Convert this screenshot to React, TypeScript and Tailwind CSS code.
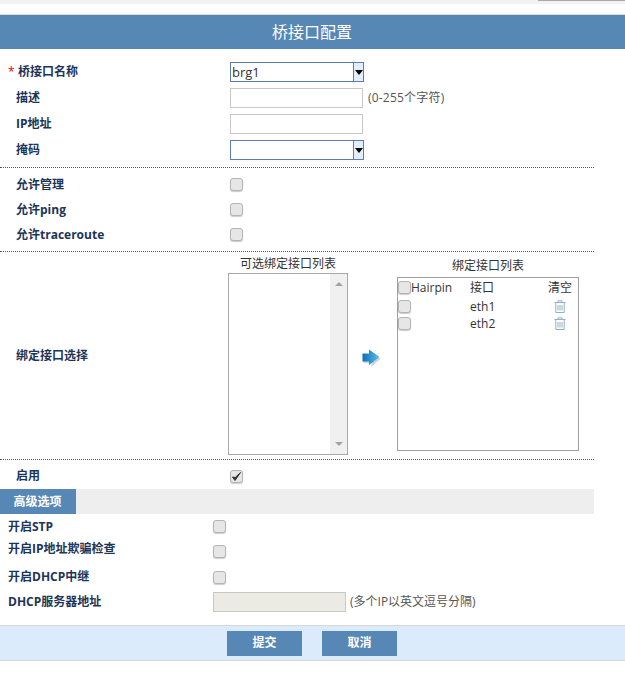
import React from "react";

const labelClass = "font-bold text-[12px] text-[#1d3557]";

function Check({ checked }: { checked?: boolean }) {
  return (
    <span className="w-[13px] h-[13px] shrink-0 rounded-[3px] border border-[#b4b4b4] bg-[#e6e6e6] shadow-[0_1px_1px_rgba(0,0,0,0.2)] flex items-center justify-center">
      {checked && (
        <svg width="11" height="11" viewBox="0 0 11 11">
          <path d="M1.5 6 L4 9.5 L9.5 1.5 L4.2 6.5 Z" fill="#333" stroke="#333" strokeWidth="1" />
        </svg>
      )}
    </span>
  );
}

function Select({ value }: { value?: string }) {
  return (
    <div className="w-[134px] h-[20px] border border-[#5a7db3] flex text-[13px] text-[#333]">
      <div className="flex-1 pl-[1px] leading-[18px]">{value}</div>
      <div className="w-[10px] border-l border-[#5a7db3] bg-[#e3eefb] flex items-center justify-center">
        <span className="border-x-[4px] border-x-transparent border-t-[5px] border-t-black" />
      </div>
    </div>
  );
}

function Input() {
  return <div className="w-[133px] h-[20px] border border-[#c8c8c8] bg-white" />;
}

function Row({ label, required, children }: { label: string; required?: boolean; children: React.ReactNode }) {
  return (
    <div className="h-[26px] flex items-center">
      <div className={`w-[230px] pl-4 relative ${labelClass}`}>
        {required && <span className="absolute left-[8px] top-0 text-[#e00] font-normal">*</span>}
        <span className={required ? "pl-[2px]" : ""}>{label}</span>
      </div>
      {children}
    </div>
  );
}

function CheckRow({ label }: { label: string }) {
  return (
    <div className="h-[25px] flex items-center">
      <div className={`w-[230px] pl-4 ${labelClass}`}>{label}</div>
      <span className="-mt-[1px]">
        <Check />
      </span>
    </div>
  );
}

function Trash() {
  return (
    <svg width="12" height="13" viewBox="0 0 12 13" fill="none" stroke="#8fb3c4" strokeWidth="1">
      <path d="M0.5 2.5H11.5" />
      <path d="M4 2.5V0.8H8V2.5" />
      <path d="M1.8 3V12.5H10.2V3" />
      <path d="M4 5V10.5M6 5V10.5M8 5V10.5" />
    </svg>
  );
}

function Arrow() {
  return (
    <svg width="20" height="18" viewBox="0 0 20 18">
      <defs>
        <linearGradient id="arrowFill" x1="0" y1="0" x2="1" y2="0">
          <stop offset="0" stopColor="#0b6fb5" />
          <stop offset="1" stopColor="#5cc0ef" />
        </linearGradient>
      </defs>
      <path d="M1 5.5H9V1.5L18 9L9 16.5V13H1Z" fill="#9aa5ad" opacity="0.5" transform="translate(0.5 1)" />
      <path d="M0.5 4.5H7V0.5L17.5 8L7 16V12.5H0.5Z" fill="url(#arrowFill)" />
    </svg>
  );
}

function BoundRow({ name }: { name: string }) {
  return (
    <div className="h-[17px] flex items-center">
      <span className="-mt-[2px]">
        <Check />
      </span>
      <span className="ml-[59px] w-[84px] -mt-[1px]">{name}</span>
      <span className="-mt-[2px] flex">
        <Trash />
      </span>
    </div>
  );
}

export default function App() {
  return (
    <div className="w-[625px] h-[698px] bg-white overflow-hidden font-['Open_Sans','Noto_Sans_CJK_SC',sans-serif] text-[12px] text-[#333]">
      <div className="h-[4px] bg-[#f2f2f2] flex justify-end">
        <div className="w-[87px] h-[1px] bg-[#aaa]" />
      </div>
      <div className="h-[11px] bg-white border-b border-[#ddd]" />
      <div className="h-[34px] bg-[#5787b5] text-white text-[16px] flex items-center justify-center pr-[1px]">桥接口配置</div>

      <div className="pt-[10px] pb-[4px] w-[594px] border-b border-dotted border-[#555]">
        <Row label="桥接口名称" required>
          <Select value="brg1" />
        </Row>
        <Row label="描述">
          <Input />
          <span className="ml-[5px] text-[#555] tracking-[0.2px]">(0-255个字符)</span>
        </Row>
        <Row label="IP地址">
          <Input />
        </Row>
        <Row label="掩码">
          <Select />
        </Row>
      </div>

      <div className="pt-[4px] pb-[4px] w-[594px] border-b border-dotted border-[#555]">
        <CheckRow label="允许管理" />
        <CheckRow label="允许ping" />
        <CheckRow label="允许traceroute" />
      </div>

      <div className="h-[208px] w-[594px] border-b border-dotted border-[#555] flex">
        <div className={`w-[228px] pl-4 pt-[95px] ${labelClass}`}>绑定接口选择</div>
        <div className="w-[120px] flex flex-col items-center">
          <div className="h-[21px] pt-[3px] leading-[18px] whitespace-nowrap">可选绑定接口列表</div>
          <div className="w-[120px] h-[182px] border border-[#a8a8a8] flex justify-end">
            <div className="w-[17px] bg-[#f0f0f0] flex flex-col items-center justify-between py-[8px]">
              <span className="border-x-[4px] border-x-transparent border-b-[4px] border-b-[#a3a3a3]" />
              <span className="border-x-[4px] border-x-transparent border-t-[4px] border-t-[#a3a3a3]" />
            </div>
          </div>
        </div>
        <div className="w-[49px] pt-[97px] pl-[14px]">
          <Arrow />
        </div>
        <div className="w-[182px] flex flex-col items-center">
          <div className="h-[25px] pt-[5px] leading-[18px] whitespace-nowrap">绑定接口列表</div>
          <div className="w-[182px] h-[174px] border border-[#a0a0a0]">
            <div className="h-[21px] flex items-center">
              <span className="-mt-[3px]">
                <Check />
              </span>
              <span className="w-[59px] -mt-[1px]">Hairpin</span>
              <span className="w-[78px] -mt-[1px]">接口</span>
              <span className="-mt-[1px]">清空</span>
            </div>
            <BoundRow name="eth1" />
            <BoundRow name="eth2" />
          </div>
        </div>
      </div>

      <div className="h-[29px] pt-[3px] flex items-center">
        <div className={`w-[230px] pl-4 ${labelClass}`}>启用</div>
        <Check checked />
      </div>

      <div className="w-[594px] h-[25px] bg-[#eeeeee]">
        <div className="w-[76px] h-[25px] pr-[1px] bg-[#5787b5] text-white font-bold text-[12px] flex items-center justify-center">高级选项</div>
      </div>

      <div className="pt-[2px]">
        <div className="h-[21px] flex items-center">
          <div className={`w-[213px] pl-2 ${labelClass}`}>开启STP</div>
          <Check />
        </div>
        <div className="h-[29px] flex">
          <div className={`w-[213px] pl-2 pt-[3px] ${labelClass}`}>开启IP地址欺骗检查</div>
          <div className="pt-[8px]"><Check /></div>
        </div>
        <div className="h-[22px] flex items-center">
          <div className={`w-[213px] pl-2 ${labelClass}`}>开启DHCP中继</div>
          <Check />
        </div>
        <div className="h-[28px] flex items-center">
          <div className={`w-[213px] pl-2 ${labelClass}`}>DHCP服务器地址</div>
          <div className="w-[133px] h-[20px] border border-[#c8c8c8] bg-[#ebebe4]" />
          <span className="ml-[4px] text-[#555]">(多个IP以英文逗号分隔)</span>
        </div>
      </div>

      <div className="mt-[9px] h-[36px] bg-[#dcebfb] border-y border-[#d8d8d8] flex items-center justify-center gap-[20px] pr-[1px]">
        <button className="w-[75px] h-[25px] bg-[#5787b5] text-white font-bold text-[12px]">提交</button>
        <button className="w-[75px] h-[25px] bg-[#5787b5] text-white font-bold text-[12px]">取消</button>
      </div>
    </div>
  );
}
